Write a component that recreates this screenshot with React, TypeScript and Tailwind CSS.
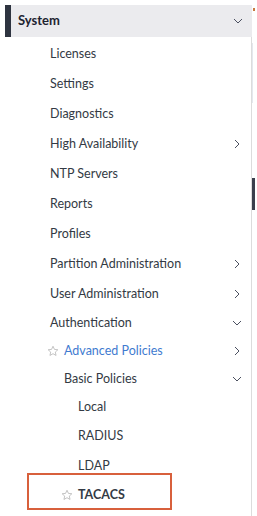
import React from "react";

type Item = {
  label: string;
  indent: number;
  h: number;
  chevron?: "right" | "down";
  star?: boolean;
  blue?: boolean;
  bold?: boolean;
  boxed?: boolean;
};

const items: Item[] = [
  { label: "Licenses", indent: 50, h: 30 },
  { label: "Settings", indent: 50, h: 30 },
  { label: "Diagnostics", indent: 50, h: 30 },
  { label: "High Availability", indent: 50, h: 30, chevron: "right" },
  { label: "NTP Servers", indent: 50, h: 30 },
  { label: "Reports", indent: 50, h: 30 },
  { label: "Profiles", indent: 50, h: 30 },
  { label: "Partition Administration", indent: 50, h: 30, chevron: "right" },
  { label: "User Administration", indent: 50, h: 30, chevron: "right" },
  { label: "Authentication", indent: 50, h: 28, chevron: "down" },
  { label: "Advanced Policies", indent: 64, h: 28, chevron: "right", star: true, blue: true },
  { label: "Basic Policies", indent: 64, h: 28, chevron: "down" },
  { label: "Local", indent: 78, h: 28 },
  { label: "RADIUS", indent: 78, h: 30 },
  { label: "LDAP", indent: 78, h: 30 },
  { label: "TACACS", indent: 78, h: 28, star: true, bold: true, boxed: true },
];

const Chevron = ({ dir }: { dir: "right" | "down" }) => (
  <svg width="10" height="10" viewBox="0 0 10 10" className="text-[#4b5060]">
    {dir === "down" ? (
      <path d="M1 3 L5 7 L9 3" fill="none" stroke="currentColor" strokeWidth="1" />
    ) : (
      <path d="M3 1 L7 5 L3 9" fill="none" stroke="currentColor" strokeWidth="1" />
    )}
  </svg>
);

const Star = () => (
  <svg width="12" height="12" viewBox="0 0 24 24" className="mr-[5px]">
    <path
      d="M12 2.5l2.9 6.3 6.8.7-5.1 4.6 1.5 6.8L12 17.4l-6.1 3.5 1.5-6.8L2.3 9.5l6.8-.7z"
      fill="none"
      stroke="#b5b5b5"
      strokeWidth="1.6"
      strokeLinejoin="round"
    />
  </svg>
);

const Row = ({ item }: { item: Item }) => {
  const textColor = item.blue ? "text-[#3f7bd0]" : "text-[#333a44]";
  return (
    <div
      className="relative flex items-center pr-[9px]"
      style={{ height: item.h, paddingLeft: item.star ? item.indent - 17 : item.indent }}
    >
      {item.boxed && (
        <div className="absolute left-[27px] top-[-8px] h-[37px] w-[145px] border-2 border-[#d8603c]" />
      )}
      {item.star && <Star />}
      <span className={`flex-1 text-[12.5px] ${textColor} ${item.bold ? "font-bold text-[#1e2430]" : ""}`}>
        {item.label}
      </span>
      {item.chevron && <Chevron dir={item.chevron} />}
    </div>
  );
};

export default function App() {
  return (
    <div className="flex h-[516px] w-[257px] bg-white pt-[5px]" style={{ fontFamily: "Lato, 'Open Sans', sans-serif" }}>
      <div className="flex w-[252px] flex-col">
        <div className="ml-[5px] flex h-[32px] items-center bg-[#ebebee] pr-[9px]">
          <div className="h-full w-[6px] bg-[#2e3440]" />
          <span className="ml-[7px] flex-1 text-[13px] font-bold text-[#1e2430]">System</span>
          <Chevron dir="down" />
        </div>
        <div className="flex flex-1 flex-col border-r border-[#dcdcdc] pt-[2px]">
          {items.map((it) => (
            <Row key={it.label} item={it} />
          ))}
        </div>
      </div>
      <div className="flex w-[5px] flex-col">
        <div className="ml-[1px] mt-[3px] h-[3px] w-[2px] bg-[#c87a40]" />
        <div className="mt-[32px] h-[60px] border-l border-[#e4e8ee]" />
        <div className="mt-[75px] h-[32px] w-[3px] bg-[#3a3f4c]" />
      </div>
    </div>
  );
}
